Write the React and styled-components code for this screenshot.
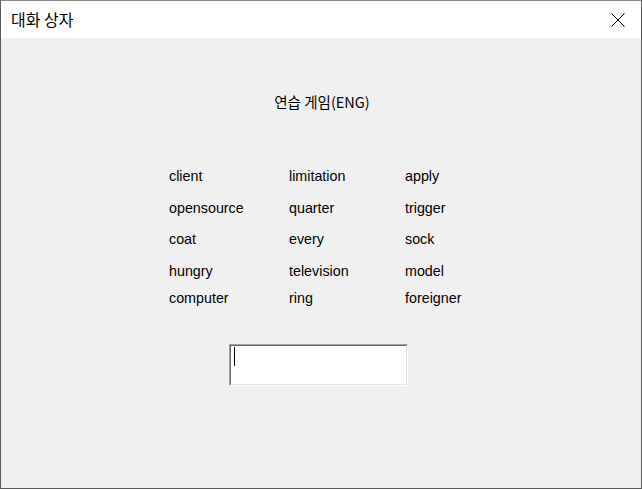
import React from "react";
import styled, { createGlobalStyle } from "styled-components";

const GlobalStyle = createGlobalStyle`
  html, body {
    margin: 0;
    padding: 0;
    background: #f0f0f0;
  }
  * { box-sizing: border-box; }
`;

const uiFont = `"Liberation Sans", "Noto Sans CJK KR", sans-serif`;

const Window = styled.div`
  width: 642px;
  height: 489px;
  border: 1px solid #595959;
  border-top-color: #8a8a8a;
  background: #f0f0f0;
  display: flex;
  flex-direction: column;
  font-family: ${uiFont};
  color: #000;
`;

const TitleBar = styled.div`
  height: 37px;
  background: #fff;
  display: flex;
  align-items: center;
  justify-content: space-between;
  flex-shrink: 0;
`;

const Title = styled.span`
  font-family: "Noto Sans CJK KR", sans-serif;
  font-size: 16px;
  padding-left: 10px;
  padding-bottom: 1px;
`;

const CloseButton = styled.div`
  width: 46px;
  height: 37px;
  display: flex;
  align-items: center;
  justify-content: center;
`;

const Body = styled.div`
  flex: 1;
  display: flex;
  flex-direction: column;
  padding-top: 54px;
`;

const Heading = styled.div`
  font-family: "Noto Sans CJK KR", sans-serif;
  font-size: 14.5px;
  line-height: 20px;
  text-align: center;
  padding-left: 2px;
`;

const WordGrid = styled.div`
  display: grid;
  grid-template-columns: 120px 116px 100px;
  grid-template-rows: 32px 31px 32px 27px 22px;
  margin-top: 56px;
  margin-left: 168px;
`;

const Word = styled.div`
  font-size: 14.3px;
  line-height: 16px;
`;

const Input = styled.div`
  margin-top: 32px;
  margin-left: 228px;
  width: 179px;
  height: 42px;
  background: #fff;
  border-style: solid;
  border-width: 1px;
  border-color: #a0a0a0 #fff #fff #a0a0a0;
  position: relative;
  &::before {
    content: "";
    position: absolute;
    inset: 0;
    border-style: solid;
    border-width: 1px;
    border-color: #696969 #e3e3e3 #e3e3e3 #696969;
  }
`;

const Caret = styled.span`
  position: absolute;
  left: 4px;
  top: 2px;
  width: 1px;
  height: 19px;
  background: #000;
`;

const words = [
  ["client", "limitation", "apply"],
  ["opensource", "quarter", "trigger"],
  ["coat", "every", "sock"],
  ["hungry", "television", "model"],
  ["computer", "ring", "foreigner"],
];

const App = () => {
  return (
    <>
      <GlobalStyle />
      <Window>
        <TitleBar>
          <Title>대화 상자</Title>
          <CloseButton>
            <svg width="14" height="14" viewBox="0 0 14 14">
              <path d="M0.5 0.5 L13.5 13.5 M13.5 0.5 L0.5 13.5" stroke="#000" strokeWidth="1" fill="none" />
            </svg>
          </CloseButton>
        </TitleBar>
        <Body>
          <Heading>연습 게임(ENG)</Heading>
          <WordGrid>
            {words.flat().map((w) => (
              <Word key={w}>{w}</Word>
            ))}
          </WordGrid>
          <Input>
            <Caret />
          </Input>
        </Body>
      </Window>
    </>
  );
};

export default App;
